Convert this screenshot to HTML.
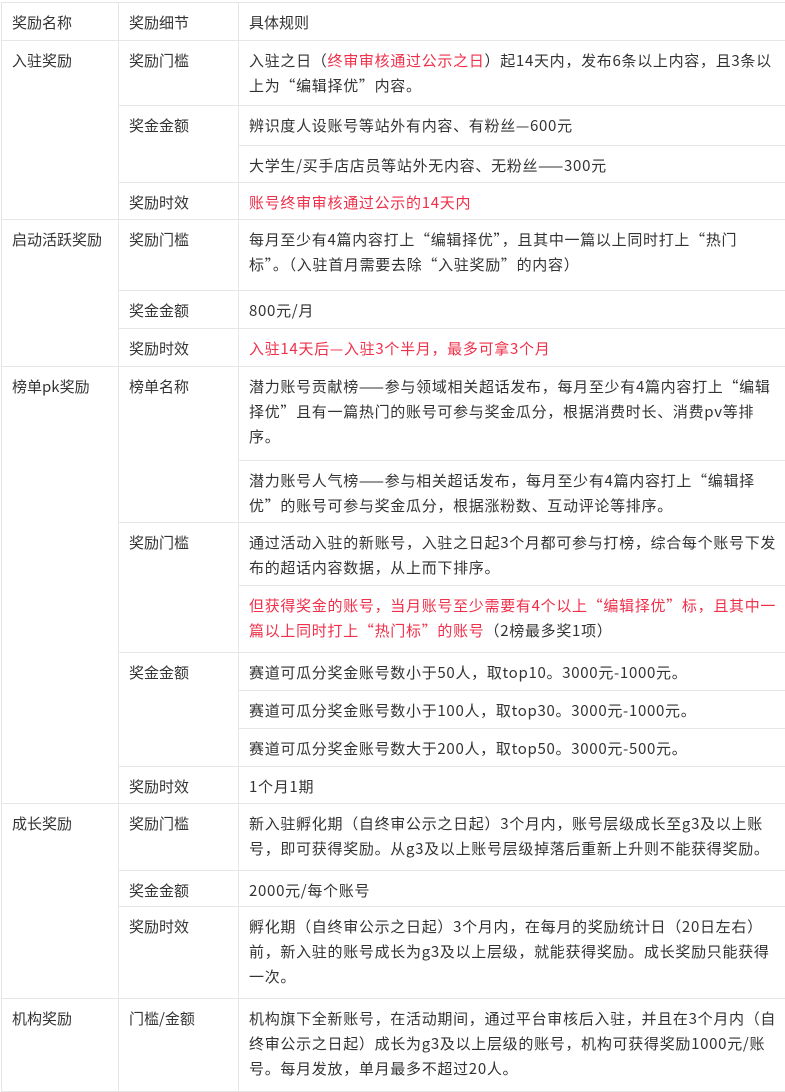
<!DOCTYPE html>
<html><head><meta charset="utf-8"><style>
body{margin:0;background:#fff;width:785px;height:1091px;overflow:hidden;font-family:"Noto Sans CJK SC","Liberation Sans",sans-serif;font-size:15px;color:#333}
table{position:absolute;left:1px;top:2px;border-collapse:collapse;table-layout:fixed;width:786px}
td{border:1px solid #e6e6e6;vertical-align:top;padding:7px 8px 0 10px;line-height:25px;box-sizing:border-box;white-space:nowrap;overflow:hidden}
td.c{letter-spacing:0.7px}
.r{color:#f0304a}
</style></head><body>
<table>
<colgroup><col style="width:117px"><col style="width:120px"><col style="width:549px"></colgroup>
<tr style="height:38px"><td>奖励名称</td><td>奖励细节</td><td>具体规则</td></tr>
<tr style="height:65px"><td rowspan="4">入驻奖励</td><td>奖励门槛</td><td class="c">入驻之日（<span class="r">终审审核通过公示之日</span>）起14天内，发布6条以上内容，且3条以<br>上为“编辑择优”内容。</td></tr>
<tr style="height:40px"><td rowspan="2">奖金金额</td><td class="c">辨识度人设账号等站外有内容、有粉丝—600元</td></tr>
<tr style="height:37px"><td class="c">大学生/买手店店员等站外无内容、无粉丝——300元</td></tr>
<tr style="height:37px"><td>奖励时效</td><td class="r c">账号终审审核通过公示的14天内</td></tr>
<tr style="height:71px"><td rowspan="3">启动活跃奖励</td><td>奖励门槛</td><td class="c">每月至少有4篇内容打上“编辑择优”，且其中一篇以上同时打上“热门<br>标”。（入驻首月需要去除“入驻奖励”的内容）</td></tr>
<tr style="height:38px"><td>奖金金额</td><td class="c">800元/月</td></tr>
<tr style="height:38px"><td>奖励时效</td><td class="r c">入驻14天后—入驻3个半月，最多可拿3个月</td></tr>
<tr style="height:94px"><td rowspan="8">榜单pk奖励</td><td rowspan="2">榜单名称</td><td class="c">潜力账号贡献榜——参与领域相关超话发布，每月至少有4篇内容打上“编辑<br>择优”且有一篇热门的账号可参与奖金瓜分，根据消费时长、消费pv等排<br>序。</td></tr>
<tr style="height:62px"><td class="c">潜力账号人气榜——参与相关超话发布，每月至少有4篇内容打上“编辑择<br>优”的账号可参与奖金瓜分，根据涨粉数、互动评论等排序。</td></tr>
<tr style="height:63px"><td rowspan="2">奖励门槛</td><td class="c">通过活动入驻的新账号，入驻之日起3个月都可参与打榜，综合每个账号下发<br>布的超话内容数据，从上而下排序。</td></tr>
<tr style="height:67px"><td class="r c">但获得奖金的账号，当月账号至少需要有4个以上“编辑择优”标，且其中一<br>篇以上同时打上“热门标”的账号<span style="color:#333">（2榜最多奖1项）</span></td></tr>
<tr style="height:38px"><td rowspan="3">奖金金额</td><td class="c">赛道可瓜分奖金账号数小于50人，取top10。3000元-1000元。</td></tr>
<tr style="height:38px"><td class="c">赛道可瓜分奖金账号数小于100人，取top30。3000元-1000元。</td></tr>
<tr style="height:38px"><td class="c">赛道可瓜分奖金账号数大于200人，取top50。3000元-500元。</td></tr>
<tr style="height:37px"><td>奖励时效</td><td class="c">1个月1期</td></tr>
<tr style="height:67px"><td rowspan="3">成长奖励</td><td>奖励门槛</td><td class="c">新入驻孵化期（自终审公示之日起）3个月内，账号层级成长至g3及以上账<br>号，即可获得奖励。从g3及以上账号层级掉落后重新上升则不能获得奖励。</td></tr>
<tr style="height:36px"><td>奖金金额</td><td class="c">2000元/每个账号</td></tr>
<tr style="height:92px"><td>奖励时效</td><td class="c">孵化期（自终审公示之日起）3个月内，在每月的奖励统计日（20日左右）<br>前，新入驻的账号成长为g3及以上层级，就能获得奖励。成长奖励只能获得<br>一次。</td></tr>
<tr style="height:93px"><td>机构奖励</td><td>门槛/金额</td><td class="c">机构旗下全新账号，在活动期间，通过平台审核后入驻，并且在3个月内（自<br>终审公示之日起）成长为g3及以上层级的账号，机构可获得奖励1000元/账<br>号。每月发放，单月最多不超过20人。</td></tr>
</table>
</body></html>
